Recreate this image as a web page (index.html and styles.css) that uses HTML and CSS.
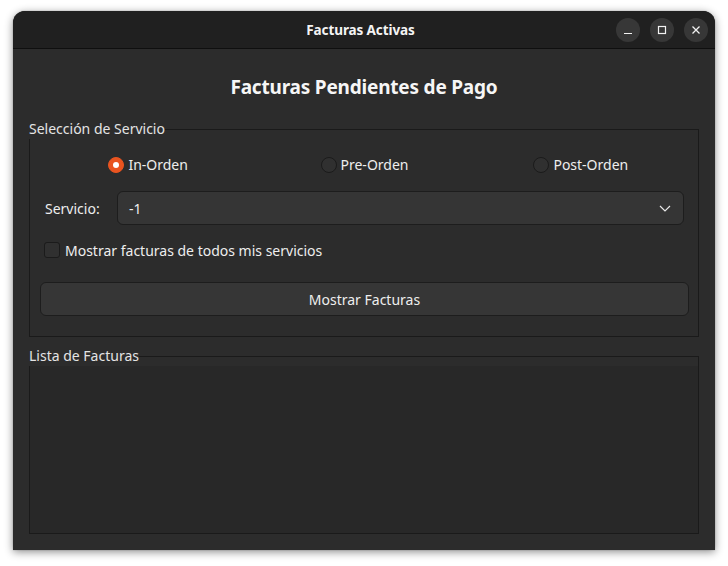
FILE: index.html
```html
<!DOCTYPE html>
<html lang="es">
<head>
<meta charset="utf-8">
<title>Facturas Activas</title>
<link rel="stylesheet" href="styles.css">
</head>
<body>
<div class="screen">
  <div class="window">
    <header class="titlebar">
      <div class="title-spacer"></div>
      <div class="title">Facturas Activas</div>
      <div class="controls">
        <span class="wbtn">
          <svg width="10" height="10" viewBox="0 0 10 10"><path d="M1 8.5h8" stroke="#f2f2f2" stroke-width="1.2" fill="none"/></svg>
        </span>
        <span class="wbtn">
          <svg width="10" height="10" viewBox="0 0 10 10"><rect x="1.5" y="1.5" width="7" height="7" stroke="#f2f2f2" stroke-width="1.2" fill="none"/></svg>
        </span>
        <span class="wbtn">
          <svg width="10" height="10" viewBox="0 0 10 10"><path d="M1.5 1.5l7 7M8.5 1.5l-7 7" stroke="#f2f2f2" stroke-width="1.3" fill="none"/></svg>
        </span>
      </div>
    </header>
    <main class="content">
      <h1 class="heading">Facturas Pendientes de Pago</h1>

      <fieldset class="frame frame-select">
        <legend class="frame-label">Selección de Servicio</legend>
        <div class="frame-body">
          <div class="radios">
            <label class="radio"><span class="radio-dot checked"></span>In-Orden</label>
            <label class="radio"><span class="radio-dot"></span>Pre-Orden</label>
            <label class="radio"><span class="radio-dot"></span>Post-Orden</label>
          </div>
          <div class="service-row">
            <span class="field-label">Servicio:</span>
            <div class="combo">
              <span class="combo-value">-1</span>
              <svg class="chevron" width="12" height="7" viewBox="0 0 12 7"><path d="M1 1l5 5 5-5" stroke="#e6e6e6" stroke-width="1.2" fill="none"/></svg>
            </div>
          </div>
          <label class="check-row"><span class="checkbox"></span>Mostrar facturas de todos mis servicios</label>
          <button class="action" type="button">Mostrar Facturas</button>
        </div>
      </fieldset>

      <fieldset class="frame frame-list">
        <legend class="frame-label">Lista de Facturas</legend>
        <div class="tree"></div>
      </fieldset>
    </main>
  </div>
</div>
</body>
</html>
```

FILE: styles.css
```css
* { box-sizing: border-box; }

html, body {
  margin: 0;
  padding: 0;
  background: #ffffff;
}

body {
  font-family: "Noto Sans", "Open Sans", sans-serif;
  font-size: 14px;
  color: #eeeeee;
}

.screen {
  width: 728px;
  height: 566px;
  padding: 11px 13px 16px 13px;
}

.window {
  width: 702px;
  height: 539px;
  background: #2c2c2c;
  border-radius: 12px 12px 0 0;
  box-shadow: 0 2px 8px rgba(0, 0, 0, 0.45), 0 0 1px rgba(0, 0, 0, 0.5);
  display: flex;
  flex-direction: column;
  overflow: hidden;
}

.titlebar {
  height: 38px;
  flex: none;
  background: #202020;
  border-bottom: 1px solid #0f0f0f;
  display: grid;
  grid-template-columns: 1fr auto 1fr;
  align-items: center;
  padding-right: 7px;
}

.title {
  font-weight: 700;
  font-size: 13.5px;
  color: #f4f4f4;
  letter-spacing: -0.1px;
}

.controls {
  justify-self: end;
  display: flex;
  gap: 10px;
}

.wbtn {
  width: 24px;
  height: 24px;
  border-radius: 50%;
  background: #373737;
  display: flex;
  align-items: center;
  justify-content: center;
}

.content {
  flex: 1;
  display: flex;
  flex-direction: column;
  padding: 26px 16px 0 16px;
}

.heading {
  margin: 0;
  font-size: 19px;
  line-height: 24px;
  font-weight: 700;
  text-align: center;
  color: #f6f6f6;
  letter-spacing: -0.2px;
}

.frame {
  margin: 0;
  padding: 0;
  border: 1px solid #1a1a1a;
  min-width: 0;
}

.frame-label {
  padding: 0;
  margin-left: -1px;
  font-size: 14px;
  line-height: 20px;
  color: #e4e4e4;
}

.frame-select {
  margin-top: 20px;
}

.frame-body {
  padding: 16px 9px 20px 10px;
  display: flex;
  flex-direction: column;
}

.radios {
  display: grid;
  grid-template-columns: repeat(3, 1fr);
  justify-items: center;
  height: 20px;
  align-items: center;
}

.radio {
  display: flex;
  align-items: center;
  gap: 4px;
  line-height: 20px;
}

.radio-dot {
  width: 16px;
  height: 16px;
  border-radius: 50%;
  background: #303030;
  border: 1px solid #1b1b1b;
  display: flex;
  align-items: center;
  justify-content: center;
}

.radio-dot.checked {
  background: #e95420;
  border-color: #e95420;
}

.radio-dot.checked::after {
  content: "";
  width: 6px;
  height: 6px;
  border-radius: 50%;
  background: #ffffff;
}

.service-row {
  margin-top: 16px;
  display: flex;
  align-items: center;
  padding: 0 5px;
  gap: 12px;
}

.field-label {
  width: 60px;
  flex: none;
}

.combo {
  flex: 1;
  height: 34px;
  background: #353535;
  border: 1px solid #1d1d1d;
  border-radius: 6px;
  display: flex;
  align-items: center;
  justify-content: space-between;
  padding: 0 12px 0 11px;
}

.check-row {
  margin-top: 15px;
  display: flex;
  align-items: center;
  gap: 5px;
  height: 20px;
  padding-left: 4px;
}

.checkbox {
  width: 16px;
  height: 16px;
  border-radius: 3px;
  background: #303030;
  border: 1px solid #1b1b1b;
}

.action {
  margin-top: 22px;
  height: 34px;
  width: 100%;
  background: #363636;
  border: 1px solid #1d1d1d;
  border-radius: 6px;
  font-family: inherit;
  font-size: 14px;
  color: #eeeeee;
  padding: 0;
}

.frame-list {
  margin-top: 9px;
}

.tree {
  height: 167px;
  background: #282828;
}
```
